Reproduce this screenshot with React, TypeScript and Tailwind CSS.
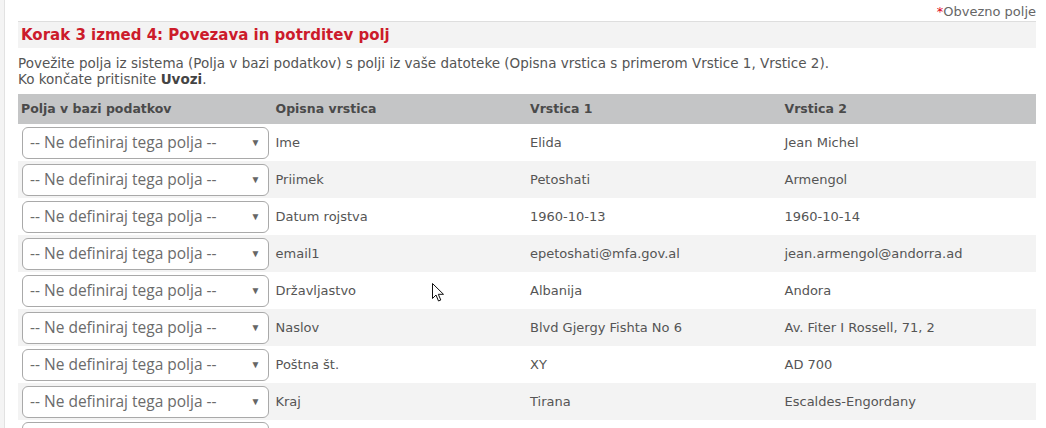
const rows: [string, string, string][] = [
  ['Ime', 'Elida', 'Jean Michel'],
  ['Priimek', 'Petoshati', 'Armengol'],
  ['Datum rojstva', '1960-10-13', '1960-10-14'],
  ['email1', 'epetoshati@mfa.gov.al', 'jean.armengol@andorra.ad'],
  ['Državljastvo', 'Albanija', 'Andora'],
  ['Naslov', 'Blvd Gjergy Fishta No 6', 'Av. Fiter I Rossell, 71, 2'],
  ['Poštna št.', 'XY', 'AD 700'],
  ['Kraj', 'Tirana', 'Escaldes-Engordany'],
];

function FieldSelect({ label = '-- Ne definiraj tega polja --' }: { label?: string }) {
  return (
    <div className="ml-[4px] mr-[4px] flex h-[32px] items-center justify-between rounded-[6px] border border-[#a9a9a9] bg-white pl-[7px] pr-[7px] font-['Open_Sans',sans-serif] text-[15.5px] text-[#6b6b6b]">
      <span>{label}</span>
      <span className="text-[10px] text-[#666]">▼</span>
    </div>
  );
}

export default function App() {
  return (
    <div className="relative flex h-[428px] w-full overflow-hidden bg-white font-['DejaVu_Sans',Verdana,sans-serif] text-[13px] text-[#555]">
      <div className="w-[5px] shrink-0 border-r border-[#e2e2e2] bg-[#f4f4f4]" />
      <div className="flex-1 pl-[13px] pr-[10px]">
        <div className="h-[21px] pt-[3px] text-right leading-[18px] text-[#666]">
          <span className="text-[#e0001b]">*</span>Obvezno polje
        </div>
        <div className="border-t border-[#dedede] bg-[#f3f3f3] pl-[3px] text-[15px] leading-[26px] font-bold text-[#cc1b2b]">
          Korak 3 izmed 4: Povezava in potrditev polj
        </div>
        <div className="mt-[7px] text-[13.5px] leading-[16px] text-[#555]">
          <p>Povežite polja iz sistema (Polja v bazi podatkov) s polji iz vaše datoteke (Opisna vrstica s primerom Vrstice 1, Vrstice 2).</p>
          <p>
            Ko končate pritisnite <b className="text-[#444]">Uvozi</b>.
          </p>
        </div>
        <div className="mt-[7px]">
          <div className="grid h-[30px] grid-cols-4 items-center bg-[#c4c5c6] text-[12.5px] font-bold text-[#4a4a4a]">
            <div className="pl-[3px]">Polja v bazi podatkov</div>
            <div className="pl-[3px]">Opisna vrstica</div>
            <div className="pl-[3px]">Vrstica 1</div>
            <div className="pl-[3px]">Vrstica 2</div>
          </div>
          {rows.map((r, i) => (
            <div
              key={i}
              className={`grid h-[37px] grid-cols-4 items-center ${i % 2 === 1 ? 'bg-[#f3f3f3]' : 'bg-white'}`}
            >
              <FieldSelect />
              <div className="pl-[3px]">{r[0]}</div>
              <div className="pl-[3px]">{r[1]}</div>
              <div className="pl-[3px]">{r[2]}</div>
            </div>
          ))}
          <div className="grid h-[37px] grid-cols-4 items-start bg-white pt-[2px]">
            <div className="ml-[4px] mr-[4px] h-[32px] rounded-[6px] border border-[#a9a9a9] bg-white" />
          </div>
        </div>
      </div>
      <svg className="absolute left-[432px] top-[283px]" width="13" height="20" viewBox="0 0 13 20">
        <path d="M0.5 0.5 L0.5 15.5 L4 12 L6.5 18 L8.8 17 L6.3 11.3 L11.5 11.3 Z" fill="white" stroke="#111" strokeWidth="1" />
      </svg>
    </div>
  );
}
